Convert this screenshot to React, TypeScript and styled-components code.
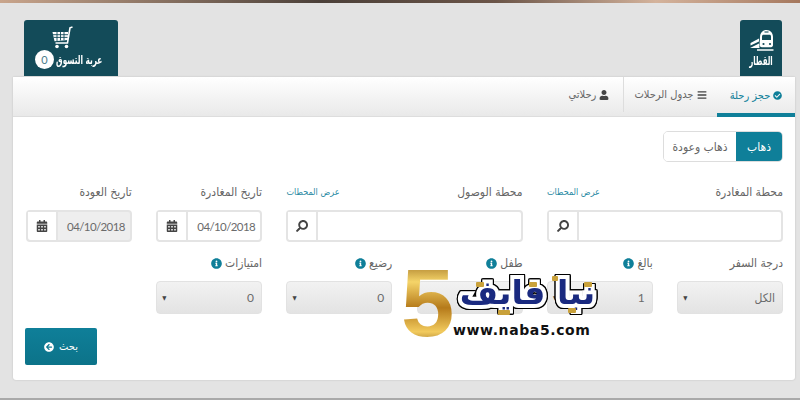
import { ReactNode } from "react";
import styled, { createGlobalStyle } from "styled-components";
import {
  FaArrowCircleLeft,
  FaBars,
  FaCalendarAlt,
  FaCheckCircle,
  FaInfoCircle,
  FaSearch,
  FaUser,
} from "react-icons/fa";

const arabicFont = `"DejaVu Sans", "Noto Sans", sans-serif`;
const valueFont = `"Lato", "DejaVu Sans", sans-serif`;

const brandDots = [
  { x: 75, y: 17, w: 8 },
  { x: 128, y: 17, w: 8 },
  { x: 97, y: 45, w: 12 },
  { x: 151, y: 11, w: 6 },
  { x: 167, y: 43, w: 8 },
  { x: 183, y: 17, w: 8 },
];

const GlobalStyle = createGlobalStyle`
  html, body {
    margin: 0;
    padding: 0;
    background: #e3e3e3;
  }

  body {
    font-family: ${arabicFont};
    font-stretch: condensed;
    color: #666;
  }

  * {
    box-sizing: border-box;
  }
`;

const Page = styled.div`
  position: relative;
  width: 800px;
  height: 400px;
  overflow: hidden;
  background: #e3e3e3;
`;

const TopStrip = styled.div`
  height: 3px;
  background: linear-gradient(90deg, #c9a58c 0%, #8f7766 18%, #4b4039 40%, #6b5548 62%, #d4b39c 82%, #a5785e 100%);
`;

const Header = styled.header`
  display: flex;
  justify-content: space-between;
  direction: rtl;
  padding: 17px 18px 0 24px;
`;

const Tile = styled.a<{ $width: number }>`
  display: flex;
  flex-direction: column;
  align-items: center;
  justify-content: flex-end;
  gap: 1px;
  width: ${({ $width }) => $width}px;
  height: 56px;
  padding-bottom: 7px;
  background: #134b59;
  border-radius: 3px 3px 0 0;
  color: #fff;
  font-size: 12px;
  font-weight: 700;
`;

const TileLabel = styled.span`
  display: flex;
  align-items: center;
  gap: 3px;
  line-height: 16px;
  white-space: nowrap;
  margin-left: 4px;
`;

const TileText = styled.span<{ $squeeze: number; $width: number }>`
  display: inline-block;
  width: ${({ $width }) => $width}px;
  text-align: center;
  transform: scaleX(${({ $squeeze }) => $squeeze});
  white-space: nowrap;
`;

const CartCount = styled.span`
  display: flex;
  align-items: center;
  justify-content: center;
  width: 19px;
  height: 19px;
  border-radius: 50%;
  background: #fff;
  color: #4a7c8a;
  font-family: ${valueFont};
  font-size: 11px;
  font-weight: 400;
`;

const Card = styled.main`
  height: 303px;
  margin: 1px 5px 0 13px;
  background: #fff;
  border-radius: 0 0 3px 3px;
  box-shadow: 0 0 2px rgba(0, 0, 0, 0.18);
`;

const Tabs = styled.nav`
  display: flex;
  direction: rtl;
  height: 40px;
  background: linear-gradient(180deg, #fff 0%, #e9e9e9 100%);
  border-bottom: 1px solid #ddd;
`;

const Tab = styled.a<{ $active?: boolean; $width: number; $divider?: boolean }>`
  display: flex;
  align-items: center;
  justify-content: center;
  gap: 3px;
  width: ${({ $width }) => $width}px;
  height: ${({ $active }) => ($active ? "40px" : "35px")};
  font-size: 11px;
  color: ${({ $active }) => ($active ? "#0f7f99" : "#666")};
  border-bottom: ${({ $active }) => ($active ? "4px solid #0f7f99" : "none")};
  border-left: ${({ $divider }) => ($divider ? "1px solid #ddd" : "none")};

  svg {
    font-size: ${({ $active }) => ($active ? "9px" : "10px")};
    color: ${({ $active }) => ($active ? "#0f7f99" : "#444")};
  }
`;

const Body = styled.section`
  direction: rtl;
  padding: 14px 12px 0 13px;
`;

const Toggle = styled.div`
  display: inline-flex;
  height: 31px;
  border: 1px solid #ddd;
  border-radius: 5px;
  overflow: hidden;
`;

const ToggleOption = styled.span<{ $on?: boolean }>`
  display: flex;
  align-items: center;
  justify-content: center;
  width: ${({ $on }) => ($on ? "46px" : "72px")};
  background: ${({ $on }) => ($on ? "#0f7f99" : "#fff")};
  color: ${({ $on }) => ($on ? "#fff" : "#666")};
  font-size: 12px;
`;

const FormGrid = styled.div`
  display: grid;
  grid-template-columns: repeat(6, 1fr);
  column-gap: 24.4px;
  margin-top: 20px;
`;

const Field = styled.div<{ $span?: number }>`
  grid-column: span ${({ $span }) => $span ?? 1};
  min-width: 0;
`;

const LabelRow = styled.div`
  display: flex;
  align-items: center;
  justify-content: space-between;
  height: 20px;
  margin-bottom: 8px;
`;

const Label = styled.label`
  display: flex;
  align-items: center;
  gap: 3px;
  font-size: 12px;
  color: #666;

  svg {
    font-size: 11px;
    color: #0f7f99;
  }
`;

const StationLink = styled.a`
  font-size: 9px;
  color: #2a8aa3;
`;

const InputGroup = styled.div<{ $disabled?: boolean }>`
  display: flex;
  height: 32px;
  border: 2px solid #e4e4e4;
  border-radius: 4px;
  background: ${({ $disabled }) => ($disabled ? "#eee" : "#fff")};
  font-family: ${valueFont};
  font-size: 11.5px;
  letter-spacing: -0.6px;
  color: #6b6b6b;
`;

const InputValue = styled.div`
  flex: 1;
  min-width: 0;
  display: flex;
  align-items: center;
  padding: 0 5px;
  direction: rtl;
`;

const Addon = styled.span`
  flex: none;
  display: flex;
  align-items: center;
  justify-content: center;
  width: 30px;
  background: #fff;
  border-right: 2px solid #e4e4e4;
  border-radius: 0 0 0 3px;
  color: #444;
  font-size: 12px;
`;

const SearchIcon = styled(FaSearch)`
  transform: scaleX(-1);
`;

const SecondRow = styled(FormGrid)`
  margin-top: 11px;
`;

const Select = styled.div`
  display: flex;
  align-items: center;
  justify-content: space-between;
  height: 33px;
  padding: 0 7px 0 5px;
  border: 1px solid #e2e2e2;
  border-radius: 4px;
  background: linear-gradient(180deg, #f2f2f2 0%, #e3e3e3 100%);
  font-family: ${valueFont};
  font-size: 12px;
  color: #6b6b6b;
`;

const Caret = styled.span`
  font-size: 6px;
  color: #444;
`;

const Actions = styled.div`
  display: flex;
  justify-content: flex-end;
  margin: 14px 0 0 -1px;
`;

const SearchButton = styled.button`
  display: flex;
  align-items: center;
  justify-content: center;
  gap: 5px;
  direction: rtl;
  width: 72px;
  height: 37px;
  border: none;
  border-radius: 2px;
  background: linear-gradient(180deg, #0f7f99 0%, #0c7389 100%);
  color: #fff;
  font-family: ${arabicFont};
  font-stretch: condensed;
  font-size: 11px;

  svg {
    font-size: 10px;
  }
`;

const BottomLine = styled.div`
  height: 2px;
  margin-top: 18px;
  background: #a9a9a9;
`;

const Watermark = styled.div`
  position: absolute;
  left: 401px;
  top: 265px;
  width: 200px;
  height: 76px;
  direction: ltr;
`;

const GoldFive = styled.span`
  position: absolute;
  left: 0;
  top: -10px;
  z-index: 1;
  font-family: "Liberation Sans", sans-serif;
  font-size: 96px;
  font-weight: 700;
  line-height: 96px;
  background: linear-gradient(180deg, #8a5a10 0%, #f5d469 28%, #b57a1a 55%, #f2cb5e 80%, #7a4d0c 100%);
  -webkit-background-clip: text;
  background-clip: text;
  color: transparent;
`;

const BrandName = styled.span`
  position: absolute;
  left: 55px;
  top: 6px;
  z-index: 2;
  width: 143px;
  text-align: center;
  direction: rtl;
  font-family: ${arabicFont};
  font-stretch: normal;
  font-size: 33px;
  font-weight: 700;
  line-height: 44px;
  white-space: nowrap;
  color: #1a2a80;
  -webkit-text-stroke: 8px #fff;
  paint-order: stroke fill;
  filter: drop-shadow(1px 0 0 #000) drop-shadow(-1px 0 0 #000) drop-shadow(0 1px 0 #000) drop-shadow(0 -1px 0 #000);
`;

const BrandDot = styled.i<{ $x: number; $y: number; $w: number }>`
  position: absolute;
  left: ${({ $x }) => $x}px;
  top: ${({ $y }) => $y}px;
  z-index: 3;
  width: ${({ $w }) => $w}px;
  height: 5px;
  border-radius: 1px;
  background: #c9a13a;
`;

const BrandUrl = styled.span`
  position: absolute;
  left: 52px;
  top: 58px;
  font-family: "DejaVu Sans", sans-serif;
  font-stretch: normal;
  font-size: 14px;
  font-weight: 700;
  line-height: 14px;
  color: #111;
  letter-spacing: 0.6px;
  white-space: nowrap;
`;

const CartGlyph = styled.svg`
  margin-right: 18px;
`;

const CartIcon = () => (
  <CartGlyph width="21" height="23" viewBox="0 0 21 23" fill="none">
    <path d="M.5 6h15.500v8l-13.500 1.200z" fill="#fff" />
    <path d="M20.500 1l-2.500.8L15.500 17H3.500" stroke="#fff" strokeWidth="1.600" />
    <circle cx="5" cy="20.500" r="1.800" fill="#fff" />
    <circle cx="14.500" cy="20.500" r="1.800" fill="#fff" />
    <path d="M1 8.700h15M1.500 11.400h14M5 6v9M8.500 6v8.500M12 6v8.200" stroke="#134b59" strokeWidth="0.900" />
  </CartGlyph>
);

const TrainIcon = () => (
  <svg width="25" height="23" viewBox="0 0 25 23" fill="none">
    <path d="M11 8c0-4 2.500-7 6.500-7s6.500 3 6.500 7v8c0 1.400-.8 2.200-2 2.200h-9c-1.400 0-2.500-.8-2.500-2.200z" fill="#fff" />
    <path d="M13 7.500c0-1.200.6-1.800 1.500-1.800h6c.9 0 1.500.6 1.500 1.800v3.500h-9z" fill="#134b59" />
    <path d="M15.500 3h4" stroke="#134b59" strokeWidth="1.100" />
    <circle cx="14.500" cy="15" r="1.100" fill="#134b59" />
    <circle cx="21" cy="15" r="1.100" fill="#134b59" />
    <path d="M10 9.500L1.500 14v2.500L10 12.500M10 14.500L1 19h9.500" fill="#fff" />
    <path d="M8 21h16.500" stroke="#fff" strokeWidth="1.500" />
  </svg>
);

type FormField = {
  label: string;
  span?: number;
  info?: boolean;
};

const SelectField = ({ label, value, info }: FormField & { value: string }) => (
  <Field>
    <LabelRow>
      <Label>
        {label}
        {info && <FaInfoCircle />}
      </Label>
    </LabelRow>
    <Select>
      <span>{value}</span>
      <Caret>▼</Caret>
    </Select>
  </Field>
);

const AddonField = ({
  label,
  span,
  link,
  icon,
  children,
  disabled,
}: FormField & { link?: boolean; icon: ReactNode; children?: ReactNode; disabled?: boolean }) => (
  <Field $span={span}>
    <LabelRow>
      <Label>{label}</Label>
      {link && <StationLink>عرض المحطات</StationLink>}
    </LabelRow>
    <InputGroup $disabled={disabled}>
      <InputValue>{children}</InputValue>
      <Addon>{icon}</Addon>
    </InputGroup>
  </Field>
);

const App = () => {
  return (
    <Page>
      <GlobalStyle />
      <TopStrip />
      <Header>
        <Tile $width={42}>
          <TrainIcon />
          <TileLabel>
            <TileText $squeeze={0.65} $width={30}>
              القطار
            </TileText>
          </TileLabel>
        </Tile>
        <Tile $width={94}>
          <CartIcon />
          <TileLabel>
            <TileText $squeeze={0.68} $width={54}>
              عربة التسوق
            </TileText>
            <CartCount>0</CartCount>
          </TileLabel>
        </Tile>
      </Header>
      <Card>
        <Tabs>
          <Tab $active $width={78}>
            <FaCheckCircle />
            حجز رحلة
          </Tab>
          <Tab $width={94} $divider>
            <FaBars />
            جدول الرحلات
          </Tab>
          <Tab $width={68}>
            <FaUser />
            رحلاتي
          </Tab>
        </Tabs>
        <Body>
          <Toggle>
            <ToggleOption $on>ذهاب</ToggleOption>
            <ToggleOption>ذهاب وعودة</ToggleOption>
          </Toggle>
          <FormGrid>
            <AddonField label="محطة المغادرة" span={2} link icon={<SearchIcon />} />
            <AddonField label="محطة الوصول" span={2} link icon={<SearchIcon />} />
            <AddonField label="تاريخ المغادرة" icon={<FaCalendarAlt />}>
              04/10/2018
            </AddonField>
            <AddonField label="تاريخ العودة" icon={<FaCalendarAlt />} disabled>
              04/10/2018
            </AddonField>
          </FormGrid>
          <SecondRow>
            <SelectField label="درجة السفر" value="الكل" />
            <SelectField label="بالغ" value="1" info />
            <SelectField label="طفل" value="0" info />
            <SelectField label="رضيع" value="0" info />
            <SelectField label="امتيازات" value="0" info />
          </SecondRow>
          <Actions>
            <SearchButton>
              بحث
              <FaArrowCircleLeft />
            </SearchButton>
          </Actions>
        </Body>
      </Card>
      <BottomLine />
      <Watermark>
        <GoldFive>5</GoldFive>
        <BrandName>نبا فايف</BrandName>
        {brandDots.map((dot) => (
          <BrandDot key={`${dot.x}-${dot.y}`} $x={dot.x} $y={dot.y} $w={dot.w} />
        ))}
        <BrandUrl>www.naba5.com</BrandUrl>
      </Watermark>
    </Page>
  );
};

export default App;
